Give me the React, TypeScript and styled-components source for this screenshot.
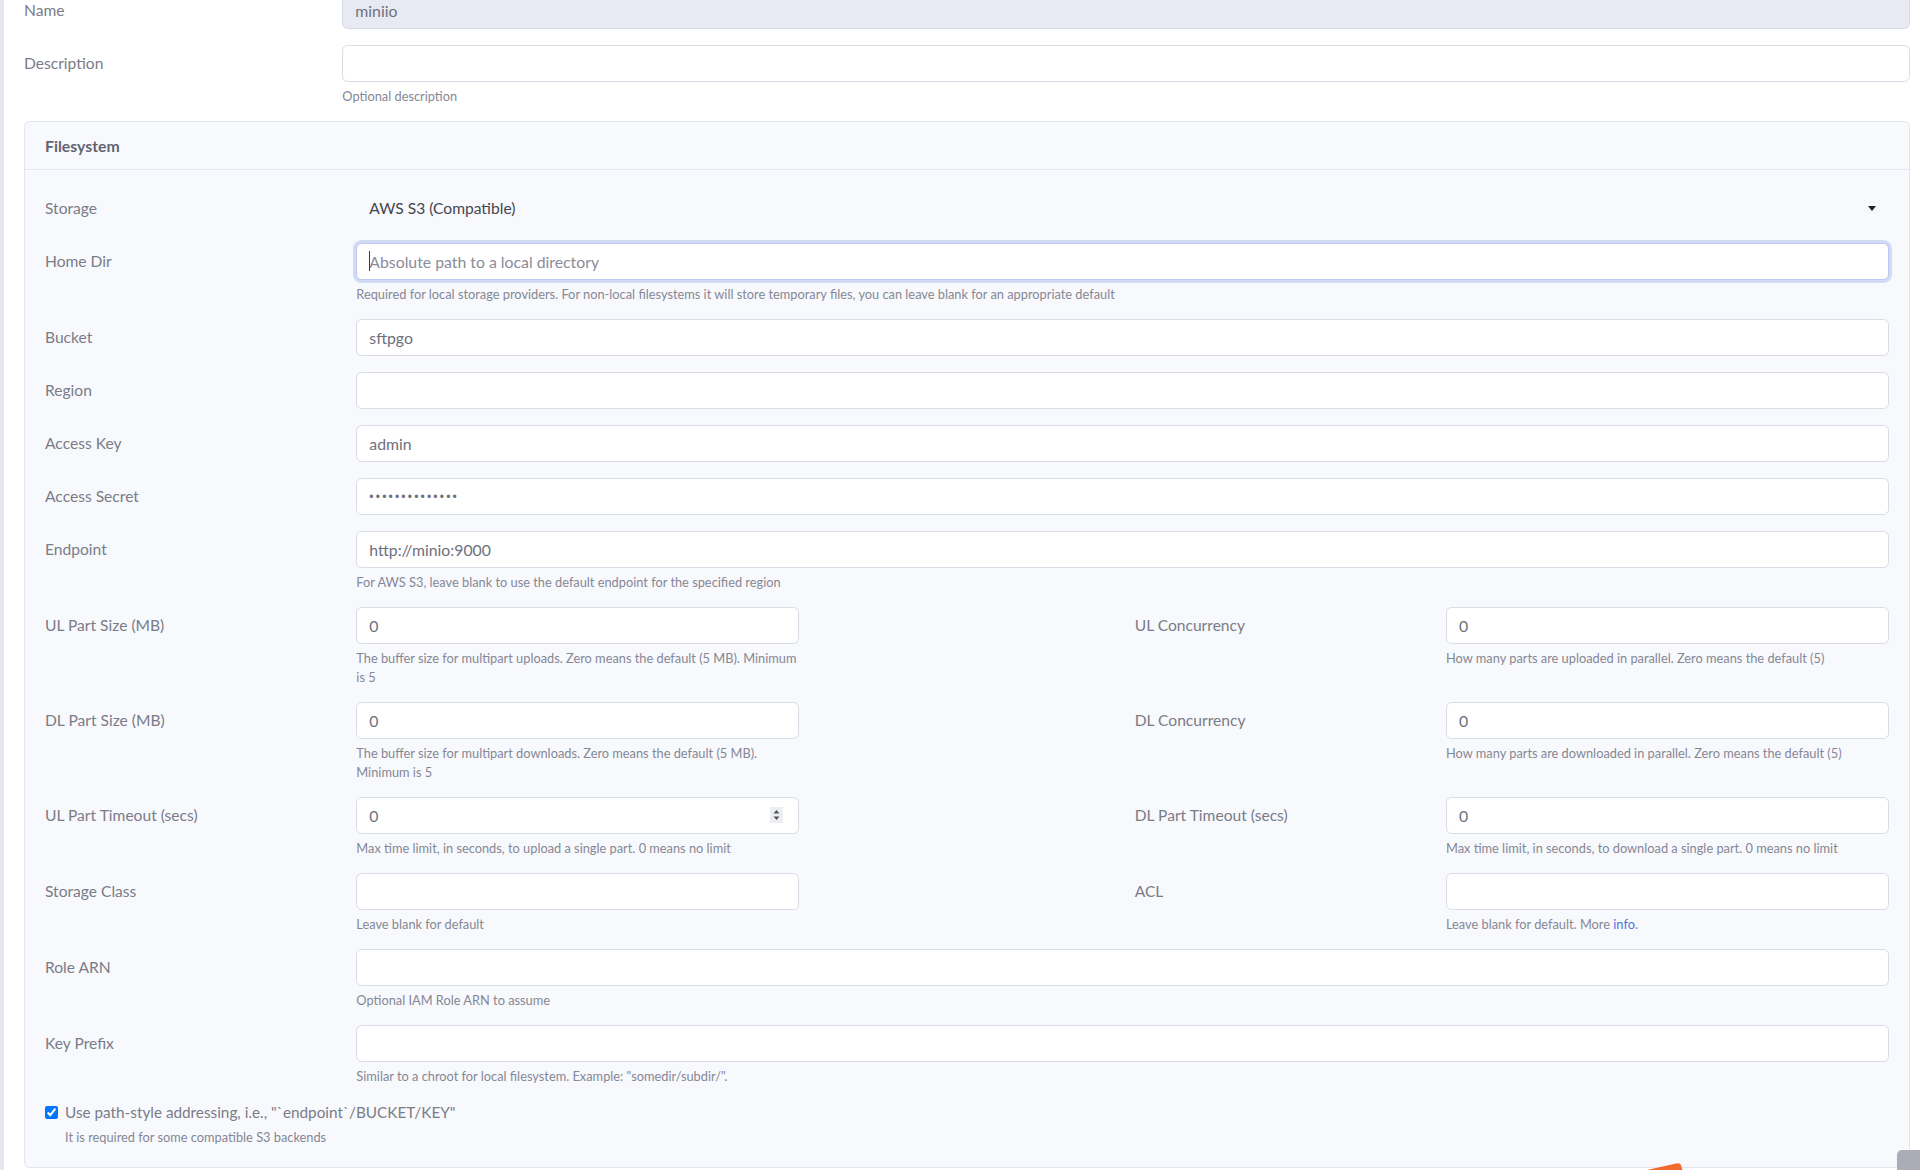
import React from "react";
import styled, { createGlobalStyle, css } from "styled-components";

const GlobalStyle = createGlobalStyle`
  html, body { margin: 0; padding: 0; background: #ffffff; overflow: hidden; }
  body { font-family: Lato, "Open Sans", "Liberation Sans", sans-serif; font-size: 16px; line-height: 1.5; color: #6e707e; }
  * { box-sizing: border-box; }
`;

const Shell = styled.div`
  border-left: 4px solid #e6e7ee;
  padding: 0 10px 0 20px;
  margin-top: -8px;
  min-height: 1190px;
`;

const Row = styled.div`
  display: flex;
  flex-wrap: wrap;
  margin: 0 -12px 16px;
`;

const LabelCol = styled.label<{ $offset?: number }>`
  flex: 0 0 16.6667%;
  max-width: 16.6667%;
  padding: 7px 12px 0;
  margin-left: ${(p) => ((p.$offset ?? 0) * 100) / 12}%;
  font-size: 15.6px;
  line-height: 23px;
  color: #7a7c89;
`;

const FieldCol = styled.div<{ $span?: number }>`
  flex: 0 0 ${(p) => ((p.$span ?? 10) * 100) / 12}%;
  max-width: ${(p) => ((p.$span ?? 10) * 100) / 12}%;
  padding: 0 12px;
  position: relative;
`;

const Input = styled.input<{ $focus?: boolean }>`
  display: block;
  width: 100%;
  height: 37px;
  padding: 6px 12px;
  font-family: inherit;
  font-size: 15.8px;
  line-height: 23px;
  color: #6e707e;
  background: #ffffff;
  border: 1px solid #d9dbe6;
  border-radius: 5.6px;
  outline: none;
  &::placeholder { color: #8a8c99; opacity: 1; }
  &:disabled { background: #e8eaf3; color: #6e707e; }
  &[type="password"] {
    font-family: "Liberation Sans", Arial, sans-serif;
    font-size: 12px;
    letter-spacing: 2.2px;
    color: #6e707e;
  }
  ${(p) =>
    p.$focus &&
    css`
      border-color: #bac8f3;
      box-shadow: 0 0 0 3px rgba(78, 115, 223, 0.22);
    `}
`;

const Caret = styled.span`
  position: absolute;
  left: 25px;
  top: 8px;
  width: 1px;
  height: 20px;
  background: #3a3b45;
`;

const Spinner = styled.span`
  position: absolute;
  right: 28px;
  top: 10px;
  width: 13px;
  height: 16px;
  background: #eceef3;
  display: flex;
  align-items: center;
  justify-content: center;
`;

const Help = styled.small`
  display: block;
  margin: 5px 0 -1px;
  font-size: 12.8px;
  line-height: 19px;
  color: #858796;
`;

const Link = styled.a`
  color: #4e73df;
  text-decoration: none;
`;

const Card = styled.section`
  background: #f8f9fc;
  border: 1px solid #e3e6f0;
  border-radius: 5.6px;
  margin-bottom: 16px;
`;

const CardHeader = styled.header`
  padding: 12px 20px;
  border-bottom: 1px solid #e3e6f0;
  font-weight: 700;
  font-size: 15.8px;
  line-height: 23px;
  color: #62646f;
`;

const CardBody = styled.div`
  padding: 20px;
`;

const SelectBox = styled.div`
  display: flex;
  align-items: center;
  justify-content: space-between;
  height: 37px;
  padding: 6px 13px;
  font-size: 15.6px;
  color: #44464f;
`;

const CheckGroup = styled.div``;

const CheckRow = styled.label`
  display: flex;
  align-items: center;
  gap: 7px;
  font-size: 15.3px;
  line-height: 23px;
  color: #7a7c89;
  input {
    margin: 0;
    width: 13px;
    height: 13px;
    accent-color: #0075ff;
  }
`;

const CheckHelp = styled.small`
  display: block;
  margin-top: 4px;
  padding-left: 20px;
  font-size: 12.8px;
  line-height: 19px;
  color: #858796;
`;

const ScrollTop = styled.div`
  position: fixed;
  left: 1897px;
  top: 1150px;
  width: 44px;
  height: 44px;
  border-radius: 5px;
  background: #abacb6;
`;

const Ribbon = styled.svg`
  position: fixed;
  left: 1640px;
  top: 1158px;
`;

type FieldProps = {
  label: string;
  value?: string;
  placeholder?: string;
  help?: React.ReactNode;
  span?: number;
  type?: string;
  focus?: boolean;
  spinner?: boolean;
  offset?: number;
};

const LabelAndInput = ({ label, value, placeholder, help, span, type, focus, spinner, offset }: FieldProps) => (
  <>
    <LabelCol $offset={offset}>{label}</LabelCol>
    <FieldCol $span={span}>
      <Input
        type={type ?? "text"}
        defaultValue={value}
        placeholder={placeholder}
        $focus={focus}
        readOnly
      />
      {focus && <Caret />}
      {spinner && (
        <Spinner>
          <svg width="7" height="12" viewBox="0 0 7 12">
            <path d="M3.5 1 L6.5 4.5 L0.5 4.5 Z" fill="#555" />
            <path d="M3.5 11 L6.5 7.5 L0.5 7.5 Z" fill="#555" />
          </svg>
        </Spinner>
      )}
      {help && <Help>{help}</Help>}
    </FieldCol>
  </>
);

export default function App() {
  return (
    <>
      <GlobalStyle />
      <Shell>
        <Row>
          <LabelCol>Name</LabelCol>
          <FieldCol>
            <Input defaultValue="miniio" disabled />
          </FieldCol>
        </Row>
        <Row>
          <LabelAndInput label="Description" help="Optional description" />
        </Row>

        <Card>
          <CardHeader>Filesystem</CardHeader>
          <CardBody>
            <Row>
              <LabelCol>Storage</LabelCol>
              <FieldCol>
                <SelectBox>
                  <span>AWS S3 (Compatible)</span>
                  <svg width="8" height="5" viewBox="0 0 8 5">
                    <path d="M0 0 L8 0 L4 5 Z" fill="#222" />
                  </svg>
                </SelectBox>
              </FieldCol>
            </Row>
            <Row>
              <LabelAndInput
                label="Home Dir"
                placeholder="Absolute path to a local directory"
                focus
                help="Required for local storage providers. For non-local filesystems it will store temporary files, you can leave blank for an appropriate default"
              />
            </Row>
            <Row>
              <LabelAndInput label="Bucket" value="sftpgo" />
            </Row>
            <Row>
              <LabelAndInput label="Region" />
            </Row>
            <Row>
              <LabelAndInput label="Access Key" value="admin" />
            </Row>
            <Row>
              <LabelAndInput label="Access Secret" type="password" value="xxxxxxxxxxxxxx" />
            </Row>
            <Row>
              <LabelAndInput
                label="Endpoint"
                value="http://minio:9000"
                help="For AWS S3, leave blank to use the default endpoint for the specified region"
              />
            </Row>
            <Row>
              <LabelAndInput
                label="UL Part Size (MB)"
                value="0"
                span={3}
                help="The buffer size for multipart uploads. Zero means the default (5 MB). Minimum is 5"
              />
              <LabelAndInput
                label="UL Concurrency"
                value="0"
                span={3}
                offset={2}
                help="How many parts are uploaded in parallel. Zero means the default (5)"
              />
            </Row>
            <Row>
              <LabelAndInput
                label="DL Part Size (MB)"
                value="0"
                span={3}
                help="The buffer size for multipart downloads. Zero means the default (5 MB). Minimum is 5"
              />
              <LabelAndInput
                label="DL Concurrency"
                value="0"
                span={3}
                offset={2}
                help="How many parts are downloaded in parallel. Zero means the default (5)"
              />
            </Row>
            <Row>
              <LabelAndInput
                label="UL Part Timeout (secs)"
                value="0"
                span={3}
                spinner
                help="Max time limit, in seconds, to upload a single part. 0 means no limit"
              />
              <LabelAndInput
                label="DL Part Timeout (secs)"
                value="0"
                span={3}
                offset={2}
                help="Max time limit, in seconds, to download a single part. 0 means no limit"
              />
            </Row>
            <Row>
              <LabelAndInput label="Storage Class" span={3} help="Leave blank for default" />
              <LabelAndInput
                label="ACL"
                span={3}
                offset={2}
                help={
                  <>
                    Leave blank for default. More <Link href="#">info</Link>.
                  </>
                }
              />
            </Row>
            <Row>
              <LabelAndInput label="Role ARN" help="Optional IAM Role ARN to assume" />
            </Row>
            <Row>
              <LabelAndInput
                label="Key Prefix"
                help={'Similar to a chroot for local filesystem. Example: "somedir/subdir/".'}
              />
            </Row>
            <CheckGroup>
              <CheckRow>
                <input type="checkbox" defaultChecked />
                <span>Use path-style addressing, i.e., "`endpoint`/BUCKET/KEY"</span>
              </CheckRow>
              <CheckHelp>It is required for some compatible S3 backends</CheckHelp>
            </CheckGroup>
          </CardBody>
        </Card>
      </Shell>
      <ScrollTop />
      <Ribbon width="50" height="14" viewBox="0 0 50 14">
        <path d="M7 12 L36 5.5 Q40 4.5 41 7 L43 14 L4 14 Z" fill="#f26a2e" />
      </Ribbon>
    </>
  );
}
